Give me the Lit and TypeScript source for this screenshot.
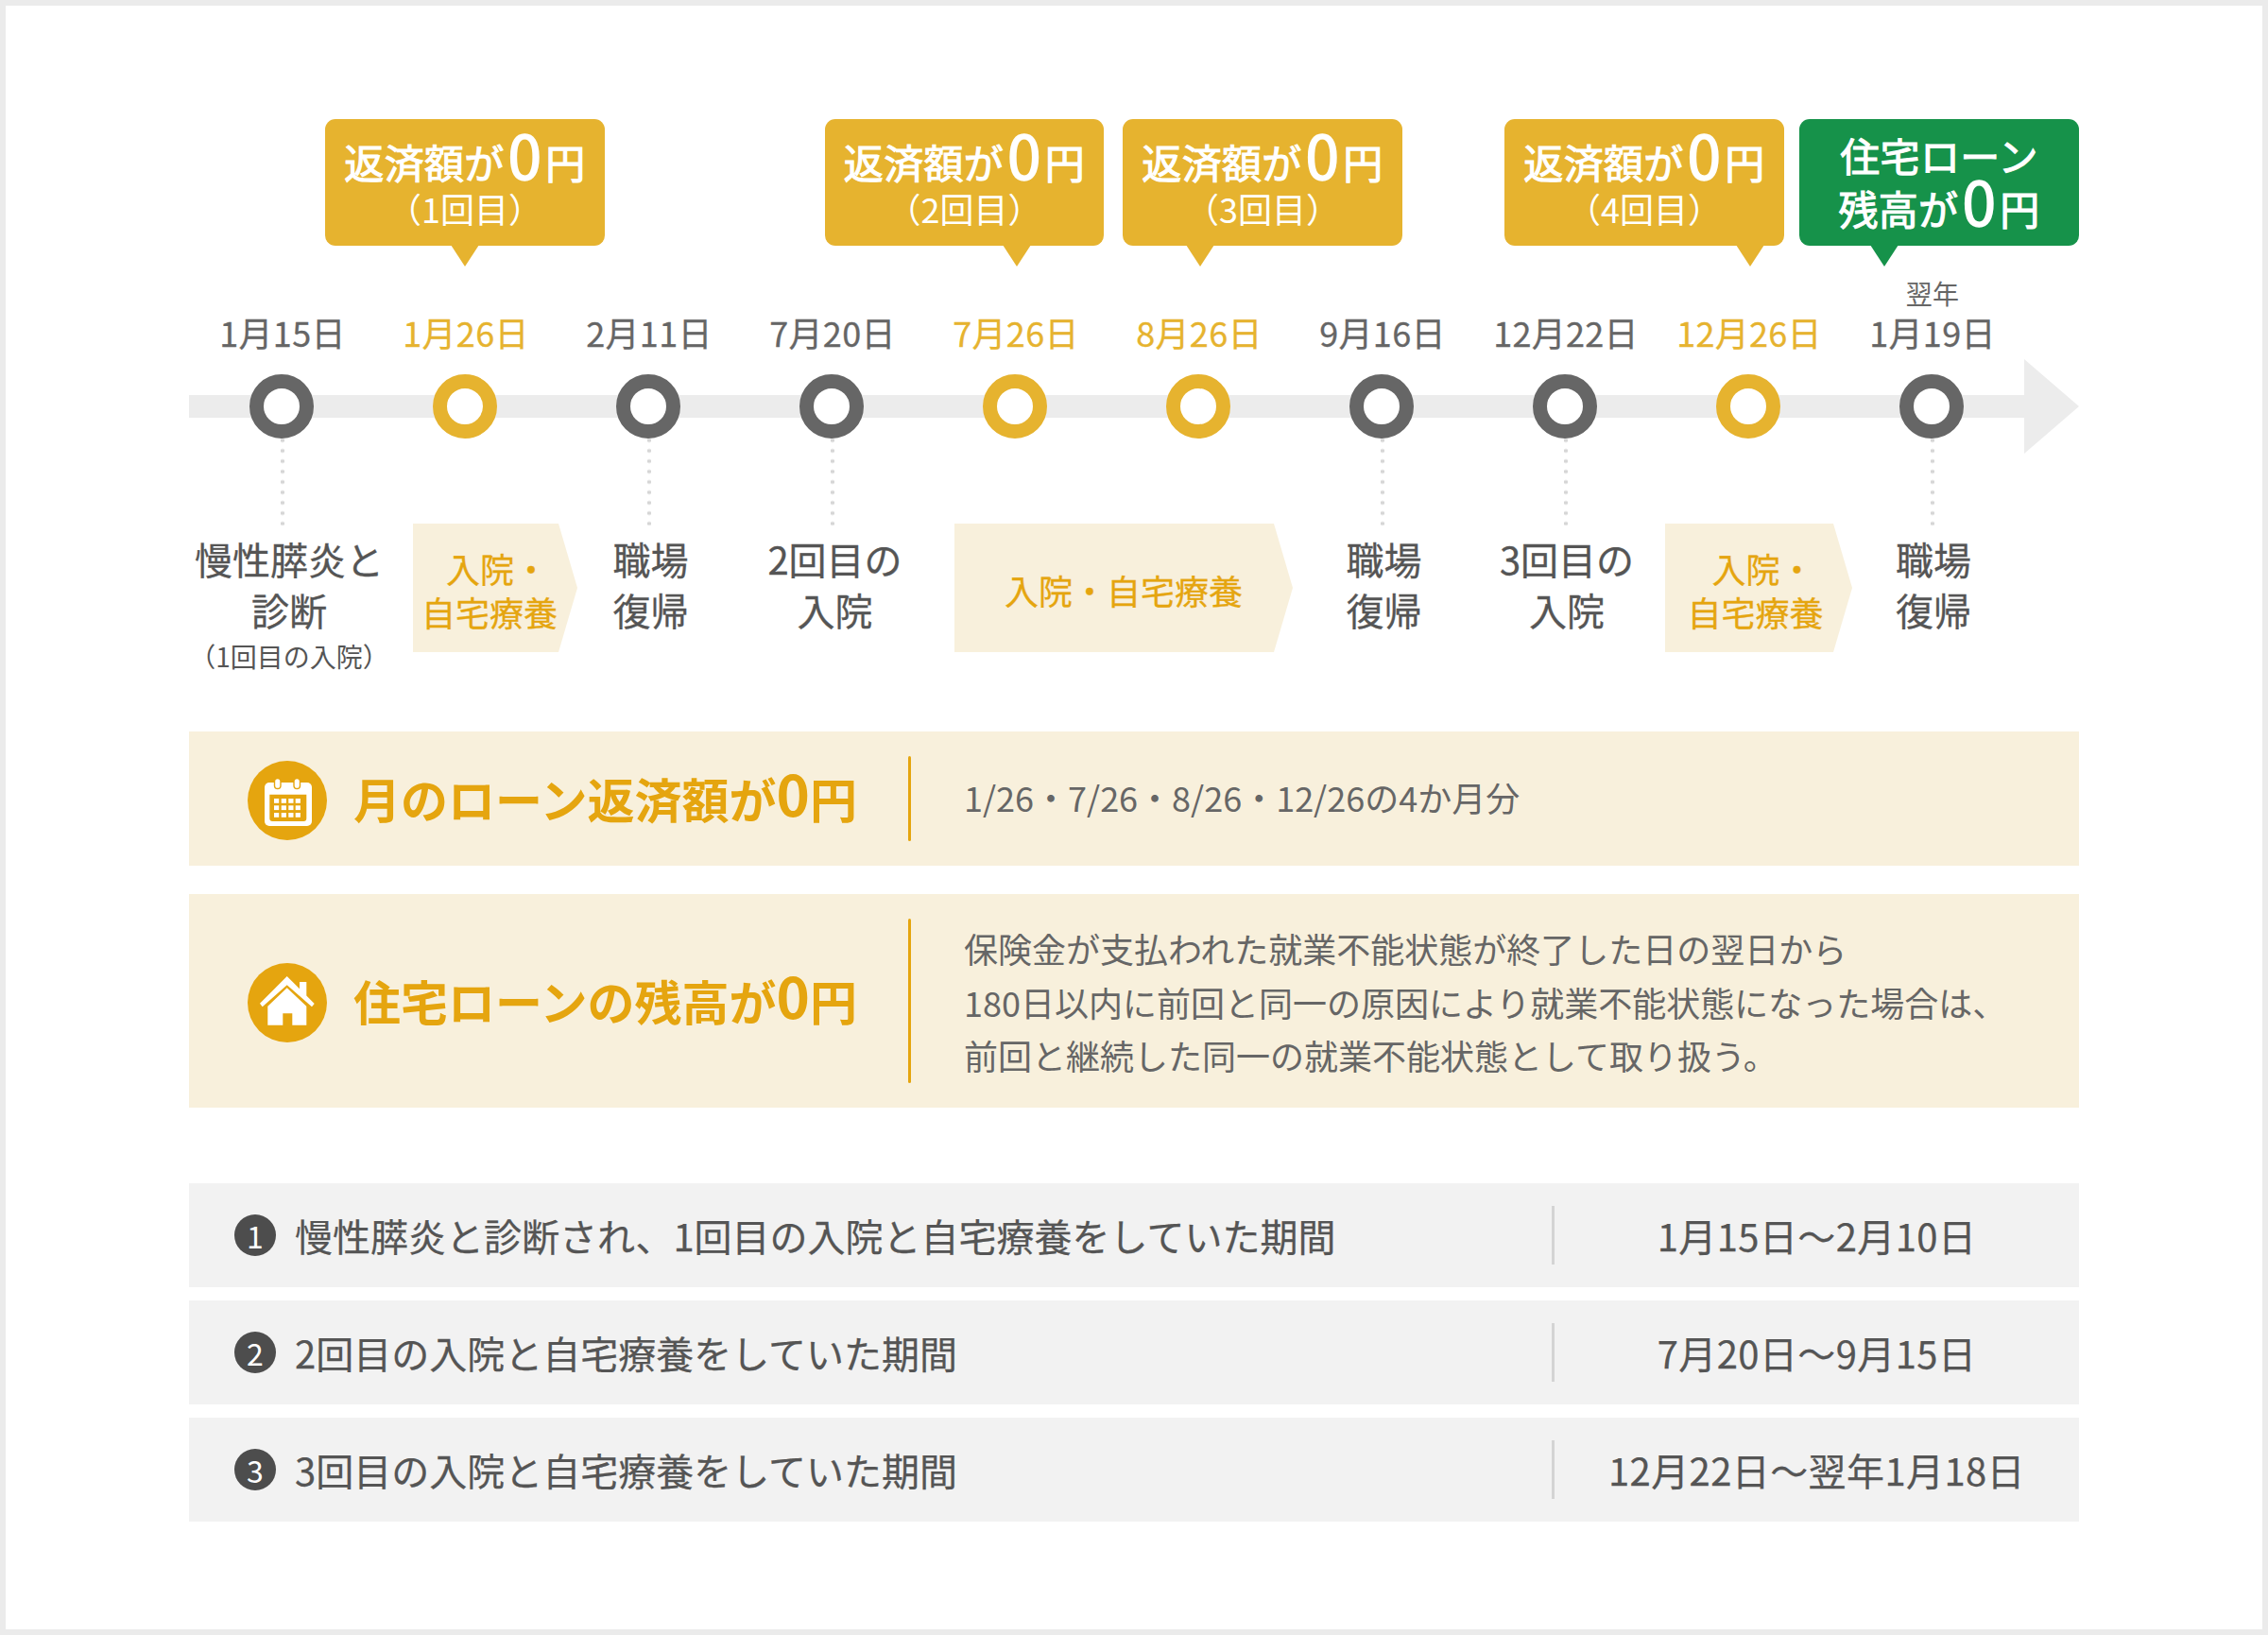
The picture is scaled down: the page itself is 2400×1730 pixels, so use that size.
import { LitElement, html, css, svg } from "lit";
import { customElement } from "lit/decorators.js";

const callouts = [
  { gap: 144, w: 296, tail: 148, cls: "", a: "返済額が", b: "（1回目）" },
  { gap: 233, w: 295, tail: 203, cls: "", a: "返済額が", b: "（2回目）" },
  { gap: 20, w: 296, tail: 82, cls: "", a: "返済額が", b: "（3回目）" },
  { gap: 108, w: 296, tail: 260, cls: "", a: "返済額が", b: "（4回目）" },
  { gap: 16, w: 296, tail: 90, cls: "green", a: "", b: "" },
];

const nodes = [
  { d: "1月15日", y: false },
  { d: "1月26日", y: true },
  { d: "2月11日", y: false },
  { d: "7月20日", y: false },
  { d: "7月26日", y: true },
  { d: "8月26日", y: true },
  { d: "9月16日", y: false },
  { d: "12月22日", y: false },
  { d: "12月26日", y: true },
  { d: "1月19日", y: false, sub: "翌年" },
];

const descs = [
  { gap: 0, w: 212, lines: ["慢性膵炎と", "診断"], sub: "（1回目の入院）" },
  { gap: 25, w: 174, chev: true, nudge: 12, lines: ["入院・", "自宅療養"] },
  { gap: 0, w: 155, lines: ["職場", "復帰"] },
  { gap: 0, w: 235, lines: ["2回目の", "入院"] },
  { gap: 9, w: 358, chev: true, lines: ["入院・自宅療養"] },
  { gap: 0, w: 193, lines: ["職場", "復帰"] },
  { gap: 0, w: 194, lines: ["3回目の", "入院"] },
  { gap: 7, w: 198, chev: true, nudge: 7, lines: ["入院・", "自宅療養"] },
  { gap: 0, w: 172, lines: ["職場", "復帰"] },
];

const rows = [
  { t: "慢性膵炎と診断され、1回目の入院と自宅療養をしていた期間", r: "1月15日〜2月10日" },
  { t: "2回目の入院と自宅療養をしていた期間", r: "7月20日〜9月15日" },
  { t: "3回目の入院と自宅療養をしていた期間", r: "12月22日〜翌年1月18日" },
];

const calendarIcon = html`<svg viewBox="0 0 84 84" width="84" height="84">
  <circle cx="42" cy="42" r="42" fill="#e5a50f"></circle>
  <rect x="18" y="23" width="50" height="46" rx="5" fill="#fff"></rect>
  <path d="M23.300 35.700 H62.300 V61 a3 3 0 0 1 -3 3 H26.300 a3 3 0 0 1 -3 -3 Z" fill="#e5a50f"></path>
  ${[40, 47.3, 55].flatMap((y) =>
    [28, 35.7, 43.3, 50.7].map(
      (x) => svg`<rect x=${x} y=${y} width="5.200" height="4.800" fill="#fff"></rect>`
    )
  )}
  <rect x="28.500" y="18.500" width="6.500" height="11" rx="3.250" fill="#fff" stroke="#e5a50f" stroke-width="1.400"></rect>
  <rect x="49" y="18.500" width="6.500" height="11" rx="3.250" fill="#fff" stroke="#e5a50f" stroke-width="1.400"></rect>
</svg>`;

const houseIcon = html`<svg viewBox="0 0 84 84" width="84" height="84">
  <circle cx="42" cy="42" r="42" fill="#e5a50f"></circle>
  <path d="M41.700 14 L55 27.300 V20 H62.300 V34.600 L70.700 43 L68 46.300 L41.700 23.300 L15.700 46.300 L13 42.700 Z" fill="#fff"></path>
  <path d="M41.700 26.300 L62.300 45.700 V65.700 H47.300 V53.300 H37.300 V65.700 H21.300 V45.700 Z" fill="#fff"></path>
</svg>`;

@customElement("app-root")
export class AppRoot extends LitElement {
  static styles = css`
    :host {
      display: block;
      width: 2400px;
      height: 1730px;
      box-sizing: border-box;
      border: 6px solid #ebebeb;
      background: #fff;
      font-family: "Noto Sans CJK JP", "Noto Sans", sans-serif;
      color: #555;
    }
    .page {
      padding: 120px 194px 0;
    }
    .callouts {
      display: flex;
      height: 134px;
    }
    .callout {
      position: relative;
      box-sizing: border-box;
      height: 134px;
      flex: none;
      border-radius: 11px;
      background: #e6b32f;
      color: #fff;
      text-align: center;
      padding-top: 15px;
    }
    .callout.green {
      background: #16924a;
      padding-top: 10px;
    }
    .tail {
      position: absolute;
      top: 133px;
      width: 30px;
      height: 23px;
      margin-left: -15px;
      background: inherit;
      clip-path: polygon(0 0, 100% 0, 50% 100%);
    }
    .c1 {
      font-size: 42px;
      line-height: 60px;
      height: 57px;
      white-space: nowrap;
      -webkit-text-stroke: 1.100px #fff;
      letter-spacing: 0.3px;
    }
    .c1 b {
      font-size: 64px;
      font-weight: 400;
      margin: 0 4px;
      line-height: 0;
      position: relative;
      top: 1px;
      -webkit-text-stroke: 1.600px #fff;
    }
    .c2 {
      font-size: 36px;
      line-height: 44px;
    }
    .green .c1 {
      height: 56px;
      line-height: 56px;
    }
    .dates,
    .track {
      display: grid;
      grid-template-columns: repeat(10, 194px);
      padding-left: 1px;
    }
    .dates {
      margin-top: 30px;
      height: 82px;
      text-align: center;
      padding-left: 2px;
    }
    .date {
      display: flex;
      flex-direction: column;
      justify-content: flex-end;
      font-size: 36px;
      line-height: 42px;
      letter-spacing: 0.3px;
      color: #666;
      -webkit-text-stroke: 0.3px #666;
    }
    .date.y {
      color: #e6b32f;
      -webkit-text-stroke: 0.3px #e6b32f;
    }
    .date small {
      font-size: 28px;
      line-height: 40px;
      -webkit-text-stroke: 0;
    }
    .track {
      position: relative;
      margin-top: 8px;
      height: 100px;
      align-items: center;
      justify-items: center;
      background: linear-gradient(#ececec, #ececec) left center / 1942px 24px no-repeat;
    }
    .track::after {
      content: "";
      position: absolute;
      right: 0;
      top: 0;
      width: 58px;
      height: 100px;
      background: #ececec;
      clip-path: polygon(0 0, 100% 50%, 0 100%);
    }
    .node {
      position: relative;
      width: 68px;
      height: 68px;
      box-sizing: border-box;
      border-radius: 50%;
      border: 15.500px solid #666;
      background: #fff;
    }
    .node.y {
      border-color: #e6b32f;
    }
    .node.line::after {
      content: "";
      position: absolute;
      left: 50%;
      top: 100%;
      margin-top: 15px;
      margin-left: -1.500px;
      width: 4px;
      height: 92px;
      background: radial-gradient(circle, #d6d6d6 1.800px, transparent 2.200px) 0 -3.500px / 4px 11px repeat-y;
    }
    .descs {
      display: flex;
      align-items: flex-start;
      margin-top: 74px;
      height: 220px;
    }
    .desc {
      flex: none;
      box-sizing: border-box;
      padding-top: 10px;
      text-align: center;
      font-size: 40px;
      line-height: 54px;
      color: #555;
      white-space: nowrap;
      -webkit-text-stroke: 0.3px #555;
    }
    .desc small {
      display: block;
      font-size: 28px;
      line-height: 44px;
      -webkit-text-stroke: 0;
    }
    .chev {
      flex: none;
      box-sizing: border-box;
      height: 136px;
      padding-top: 4px;
      display: flex;
      flex-direction: column;
      align-items: center;
      justify-content: center;
      background: #f8f0dc;
      clip-path: polygon(0 0, calc(100% - 20px) 0, 100% 50%, calc(100% - 20px) 100%, 0 100%);
      color: #e5a50f;
      font-size: 36px;
      line-height: 46px;
      white-space: nowrap;
      -webkit-text-stroke: 0.3px #e5a50f;
    }
    .chev .lead {
      padding-left: 16px;
    }
    .panel {
      display: flex;
      align-items: center;
      background: #f8f0dc;
      padding: 26px 0;
      margin-bottom: 30px;
    }
    .head {
      flex: none;
      width: 761px;
      box-sizing: border-box;
      padding-left: 62px;
      display: flex;
      align-items: center;
      gap: 28px;
      color: #e5a50f;
      font-size: 50px;
      font-weight: 700;
      line-height: 60px;
      white-space: nowrap;
    }
    .head svg {
      flex: none;
      display: block;
      margin-top: 3px;
    }
    .head span {
      padding-bottom: 2px;
    }
    .head b {
      font-size: 60px;
      font-weight: 700;
      line-height: 0;
      position: relative;
      top: -2px;
    }
    .rule {
      flex: none;
      width: 3px;
      align-self: stretch;
      background: #e5a50f;
      border-radius: 2px;
    }
    .body {
      padding-left: 56px;
      font-size: 36px;
      line-height: 56.500px;
      color: #666;
      white-space: nowrap;
    }
    .one {
      height: 90px;
    }
    .one .body {
      padding-bottom: 3px;
    }
    .two {
      height: 174px;
      margin-bottom: 80px;
    }
    .two .body {
      padding-top: 2px;
    }
    .rows {
      display: flex;
      flex-direction: column;
      gap: 14px;
    }
    .row {
      display: flex;
      align-items: center;
      height: 110px;
      background: #f2f2f2;
      font-size: 40px;
      color: #555;
      white-space: nowrap;
      -webkit-text-stroke: 0.25px #555;
    }
    .num {
      flex: none;
      width: 44px;
      height: 44px;
      border-radius: 50%;
      background: #4d4d4d;
      color: #fff;
      font-size: 32px;
      line-height: 44px;
      text-align: center;
      margin: 0 20px 0 48px;
      -webkit-text-stroke: 0;
    }
    .text {
      flex: 1;
    }
    .sep {
      flex: none;
      width: 3px;
      height: 62px;
      background: #d4d4d4;
    }
    .range {
      flex: none;
      width: 555px;
      text-align: center;
      letter-spacing: 0.4px;
    }
  `;

  render() {
    return html`<div class="page">
      <div class="callouts">
        ${callouts.map(
          (c) => html`<div class="callout ${c.cls}" style="margin-left:${c.gap}px;width:${c.w}px">
            ${c.cls === "green"
              ? html`<div class="c1">住宅ローン</div>
                  <div class="c1">残高が<b>0</b>円</div>`
              : html`<div class="c1">${c.a}<b>0</b>円</div>
                  <div class="c2">${c.b}</div>`}
            <span class="tail" style="left:${c.tail}px"></span>
          </div>`
        )}
      </div>
      <div class="dates">
        ${nodes.map(
          (n) => html`<div class="date ${n.y ? "y" : ""}">
            ${n.sub ? html`<small>${n.sub}</small>` : ""}<span>${n.d}</span>
          </div>`
        )}
      </div>
      <div class="track">
        ${nodes.map((n) => html`<div class="node ${n.y ? "y" : "line"}"></div>`)}
      </div>
      <div class="descs">
        ${descs.map((d) =>
          d.chev
            ? html`<div class="chev" style="margin-left:${d.gap}px;width:${d.w}px;padding-right:${d.nudge ?? 0}px">
                ${d.lines.map((l, i) => html`<div class=${i === 0 && d.lines.length > 1 ? "lead" : ""}>${l}</div>`)}
              </div>`
            : html`<div class="desc" style="margin-left:${d.gap}px;width:${d.w}px">
                ${d.lines.map((l) => html`<div>${l}</div>`)}
                ${d.sub ? html`<small>${d.sub}</small>` : ""}
              </div>`
        )}
      </div>
      <div class="panel one">
        <div class="head">${calendarIcon}<span>月のローン返済額が<b>0</b>円</span></div>
        <div class="rule"></div>
        <div class="body">1/26・7/26・8/26・12/26の4か月分</div>
      </div>
      <div class="panel two">
        <div class="head">${houseIcon}<span>住宅ローンの残高が<b>0</b>円</span></div>
        <div class="rule"></div>
        <div class="body">
          <div>保険金が支払われた就業不能状態が終了した日の翌日から</div>
          <div>180日以内に前回と同一の原因により就業不能状態になった場合は、</div>
          <div>前回と継続した同一の就業不能状態として取り扱う。</div>
        </div>
      </div>
      <div class="rows">
        ${rows.map(
          (r, i) => html`<div class="row">
            <span class="num">${i + 1}</span>
            <span class="text">${r.t}</span>
            <span class="sep"></span>
            <span class="range">${r.r}</span>
          </div>`
        )}
      </div>
    </div>`;
  }
}
